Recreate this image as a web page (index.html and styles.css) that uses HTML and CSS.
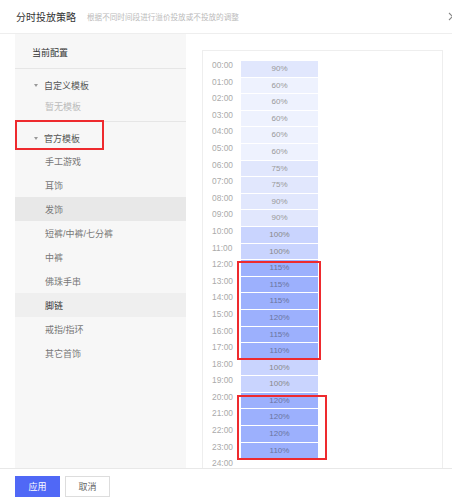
FILE: index.html
```html
<!DOCTYPE html>
<html lang="zh-CN">
<head>
    <meta charset="UTF-8">
    <meta name="viewport" content="width=device-width, initial-scale=1.0">
    <title>分时投放策略</title>
    <link rel="stylesheet" href="styles.css">
</head>
<body>
    <div class="dialog">
        <div class="dialog-header">
            <span class="dialog-title">分时投放策略</span>
            <span class="dialog-sub">根据不同时间段进行溢价投放或不投放的调整</span>
            <svg class="dialog-close" width="9" height="9" viewBox="0 0 9 9">
                <path d="M1 1L8 8M8 1L1 8" stroke="#888" stroke-width="1.1" fill="none"/>
            </svg>
        </div>

        <div class="dialog-body">
            <div class="side">
                <div class="side-current">当前配置</div>
                <div class="side-group">
                    <div class="group-title"><span class="caret"></span>自定义模板</div>
                    <div class="group-empty">暂无模板</div>
                </div>
                <div class="side-group">
                    <div class="group-title">
                        <span class="caret"></span>官方模板
                        <span class="mark mark-side"></span>
                    </div>
                    <ul class="tpl-list">
                        <li>手工游戏</li>
                        <li>耳饰</li>
                        <li class="hover">发饰</li>
                        <li>短裤/中裤/七分裤</li>
                        <li>中裤</li>
                        <li>佛珠手串</li>
                        <li class="active">脚链</li>
                        <li>戒指/指环</li>
                        <li>其它首饰</li>
                    </ul>
                </div>
            </div>

            <div class="content">
                <div class="chart-box">
                    <div class="chart">
                        <div class="row"><span class="time">00:00</span><span class="bar lv-mid">90%</span></div>
                        <div class="row"><span class="time">01:00</span><span class="bar lv-low">60%</span></div>
                        <div class="row"><span class="time">02:00</span><span class="bar lv-low">60%</span></div>
                        <div class="row"><span class="time">03:00</span><span class="bar lv-low">60%</span></div>
                        <div class="row"><span class="time">04:00</span><span class="bar lv-low">60%</span></div>
                        <div class="row"><span class="time">05:00</span><span class="bar lv-low">60%</span></div>
                        <div class="row"><span class="time">06:00</span><span class="bar lv-mid">75%</span></div>
                        <div class="row"><span class="time">07:00</span><span class="bar lv-mid">75%</span></div>
                        <div class="row"><span class="time">08:00</span><span class="bar lv-mid">90%</span></div>
                        <div class="row"><span class="time">09:00</span><span class="bar lv-mid">90%</span></div>
                        <div class="row"><span class="time">10:00</span><span class="bar lv-base">100%</span></div>
                        <div class="row"><span class="time">11:00</span><span class="bar lv-base">100%</span></div>
                        <div class="row"><span class="time">12:00</span><span class="bar lv-high">115%</span></div>
                        <div class="row"><span class="time">13:00</span><span class="bar lv-high">115%</span></div>
                        <div class="row"><span class="time">14:00</span><span class="bar lv-high">115%</span></div>
                        <div class="row"><span class="time">15:00</span><span class="bar lv-high">120%</span></div>
                        <div class="row"><span class="time">16:00</span><span class="bar lv-high">115%</span></div>
                        <div class="row"><span class="time">17:00</span><span class="bar lv-high">110%</span></div>
                        <div class="row"><span class="time">18:00</span><span class="bar lv-base">100%</span></div>
                        <div class="row"><span class="time">19:00</span><span class="bar lv-base">100%</span></div>
                        <div class="row"><span class="time">20:00</span><span class="bar lv-high">120%</span></div>
                        <div class="row"><span class="time">21:00</span><span class="bar lv-high">120%</span></div>
                        <div class="row"><span class="time">22:00</span><span class="bar lv-high">120%</span></div>
                        <div class="row"><span class="time">23:00</span><span class="bar lv-high">110%</span></div>
                        <div class="row"><span class="time">24:00</span></div>

                        <span class="mark mark-noon"></span>
                        <span class="mark mark-night"></span>
                    </div>
                </div>
            </div>
        </div>

        <div class="dialog-footer">
            <button class="btn btn-primary">应用</button>
            <button class="btn">取消</button>
        </div>
    </div>
</body>
</html>
```

FILE: styles.css
```css
/* Time-slot bidding dialog */
body {
    margin: 0;
    width: 452px;
    height: 500px;
    overflow: hidden;
    background: #fff;
    font-family: "Liberation Sans", "Noto Sans CJK SC", sans-serif;
    color: #333;
}

.dialog {
    display: flex;
    flex-direction: column;
    height: 500px;
}

/* header */
.dialog-header {
    display: flex;
    align-items: center;
    height: 34px;
    padding-left: 16px;
    border-bottom: 1px solid #eee;
    box-sizing: border-box;
}

.dialog-title {
    font-size: 10px;
    color: #333;
}

.dialog-sub {
    margin-left: 11px;
    font-size: 7.6px;
    color: #bbb;
}

.dialog-close {
    margin-left: auto;
    margin-right: -5px;
}

/* body */
.dialog-body {
    display: flex;
    height: 434px;
}

.side {
    width: 171px;
    margin-left: 15px;
    background: #f7f7f7;
    font-size: 9px;
}

.side-current {
    height: 35px;
    padding-top: 3px;
    line-height: 32px;
    padding-left: 17px;
    border-bottom: 1px solid #e6e6e6;
    box-sizing: border-box;
    color: #333;
}

.side-group {
    border-bottom: 1px solid #e6e6e6;
}

.side-group:last-child {
    border-bottom: none;
}

.group-title {
    position: relative;
    padding: 7px 0 0 29px;
    line-height: 20px;
    height: 20px;
    color: #555;
}

.caret {
    position: absolute;
    left: 19px;
    top: 15px;
    width: 0;
    height: 0;
    border-left: 2.5px solid transparent;
    border-right: 2.5px solid transparent;
    border-top: 3px solid #999;
}

.group-empty {
    padding-left: 30px;
    line-height: 22px;
    height: 22px;
    padding-bottom: 3px;
    color: #bbb;
}

.tpl-list {
    list-style: none;
    margin: 0;
    padding: 0;
}

.tpl-list li {
    height: 24px;
    line-height: 26px;
    padding-left: 30px;
    color: #777;
}

.tpl-list li.hover {
    background: #e8e8e8;
}

.tpl-list li.active {
    background: #efefef;
    color: #333;
}

/* chart */
.content {
    flex: 1;
    padding: 16px 9px 0 16px;
    overflow: hidden;
}

.chart-box {
    height: 100%;
    border: 1px solid #eee;
    border-bottom: none;
    box-sizing: border-box;
    padding: 10px 0 0 9px;
}

.chart {
    position: relative;
}

.row {
    display: flex;
    height: 16.6px;
}

.time {
    width: 29px;
    font-size: 8.4px;
    line-height: 8px;
    color: #aaa;
}

.bar {
    width: 77px;
    height: 15.6px;
    margin-bottom: 1px;
    line-height: 16px;
    text-align: center;
    font-size: 8px;
    color: #999;
}

.lv-low { background: #eef2fe; }
.lv-mid { background: #e1e7fd; }
.lv-base { background: #c9d4fe; color: #888; }
.lv-high { background: #9cb0fd; color: #6a74a0; }

/* annotation boxes */
.mark {
    position: absolute;
    border: 2px solid #ee2a2e;
    box-sizing: border-box;
}

.mark-side {
    left: 0;
    top: -2px;
    width: 89px;
    height: 30px;
}

.mark-noon {
    left: 25px;
    top: 200px;
    width: 84px;
    height: 99px;
}

.mark-night {
    left: 25px;
    top: 334px;
    width: 90px;
    height: 65px;
}

/* footer */
.dialog-footer {
    display: flex;
    gap: 5px;
    height: 32px;
    padding: 7px 15px 0;
    border-top: 1px solid #e8e8e8;
    box-sizing: border-box;
}

.btn {
    width: 45px;
    height: 21px;
    padding: 0;
    border: 1px solid #ddd;
    background: #fff;
    font-family: "Liberation Sans", "Noto Sans CJK SC", sans-serif;
    font-size: 9px;
    color: #666;
    cursor: pointer;
}

.btn-primary {
    background: #5068f6;
    border-color: #5068f6;
    color: #fff;
}
```
